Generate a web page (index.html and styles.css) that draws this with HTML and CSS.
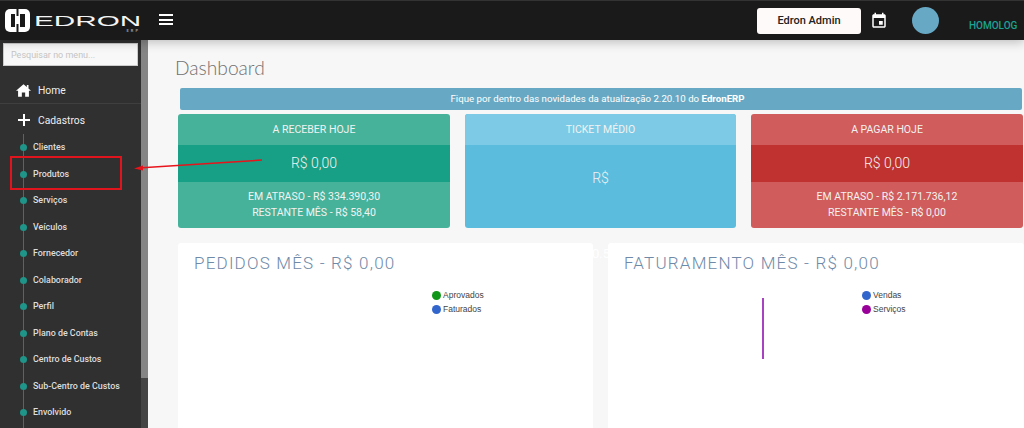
FILE: index.html
```html
<!DOCTYPE html>
<html lang="pt-BR">
<head>
    <meta charset="UTF-8">
    <meta name="viewport" content="width=device-width, initial-scale=1.0">
    <title>Edron ERP</title>
    <link rel="stylesheet" href="styles.css">
</head>
<body>
    <header class="topbar">
        <div class="logo">
            <svg class="logo-mark" width="25" height="23" viewBox="0 0 25 23">
                <rect width="25" height="23" rx="5" fill="#fff"/>
                <rect x="6" y="5" width="4" height="13" fill="#1a1a1a"/>
                <rect x="15" y="5" width="5" height="13" fill="#1a1a1a"/>
                <rect x="11.500" y="0" width="2" height="7" fill="#1a1a1a"/>
                <rect x="11.500" y="15" width="2" height="8" fill="#1a1a1a"/>
                <rect x="10" y="10" width="5" height="2.500" fill="#fff"/>
            </svg>
            <div class="logo-text">
                <span class="logo-name">EDRON</span>
                <span class="logo-sub">ERP</span>
            </div>
        </div>
        <div class="burger"><span></span><span></span><span></span></div>
        <div class="topbar-right">
            <button class="user-btn">Edron Admin</button>
            <svg class="calendar" width="18" height="18" viewBox="0 0 24 24">
                <path d="M17 12h-5v5h5v-5zM16 1v2H8V1H6v2H5c-1.100 0-2 .9-2 2v14c0 1.100.9 2 2 2h14c1.100 0 2-.9 2-2V5c0-1.100-.9-2-2-2h-1V1h-2zm3 18H5V8h14v11z" fill="#fff"/>
            </svg>
            <div class="avatar"></div>
            <span class="env">HOMOLOG</span>
        </div>
    </header>

    <div class="layout">
        <aside class="sidebar">
            <div class="search-box">
                <input type="text" placeholder="Pesquisar no menu...">
            </div>
            <a class="menu-top home">
                <svg width="15" height="13" viewBox="0 0 18 15">
                    <path d="M9 0L0 7.700H2.500V15H7V10H11V15H15.500V7.700H18L15 5V1H13V3.300Z" fill="#fff"/>
                </svg>
                <span>Home</span>
            </a>
            <a class="menu-top open">
                <svg width="12" height="12" viewBox="0 0 12 12">
                    <path d="M5 0H7V5H12V7H7V12H5V7H0V5H5Z" fill="#fff"/>
                </svg>
                <span>Cadastros</span>
            </a>
            <ul class="submenu">
                <li>Clientes</li>
                <li>Produtos</li>
                <li>Serviços</li>
                <li>Veículos</li>
                <li>Fornecedor</li>
                <li>Colaborador</li>
                <li>Perfil</li>
                <li>Plano de Contas</li>
                <li>Centro de Custos</li>
                <li>Sub-Centro de Custos</li>
                <li>Envolvido</li>
                <li></li>
            </ul>
        </aside>
        <div class="scrollbar"><div class="scroll-thumb"></div></div>

        <main class="content">
            <h1 class="page-title">Dashboard</h1>
            <div class="notice">Fique por dentro das novidades da atualização 2.20.10 do <b>EdronERP</b></div>

            <div class="cards">
                <section class="card green">
                    <div class="card-head">A RECEBER HOJE</div>
                    <div class="card-value">R$ 0,00</div>
                    <div class="card-foot">EM ATRASO - R$ 334.390,30<br>RESTANTE MÊS - R$ 58,40</div>
                </section>
                <section class="card blue">
                    <div class="card-head">TICKET MÉDIO</div>
                    <div class="card-single">R$</div>
                </section>
                <section class="card red">
                    <div class="card-head">A PAGAR HOJE</div>
                    <div class="card-value">R$ 0,00</div>
                    <div class="card-foot">EM ATRASO - R$ 2.171.736,12<br>RESTANTE MÊS - R$ 0,00</div>
                </section>
            </div>

            <div class="charts">
                <section class="chart">
                    <h2>PEDIDOS MÊS - R$ 0,00</h2>
                    <ul class="legend">
                        <li><i class="dot dot-green"></i>Aprovados</li>
                        <li><i class="dot dot-blue"></i>Faturados</li>
                    </ul>
                    <span class="stray-label">0.5</span>
                </section>
                <section class="chart">
                    <h2>FATURAMENTO MÊS - R$ 0,00</h2>
                    <div class="chart-line"></div>
                    <ul class="legend">
                        <li><i class="dot dot-blue"></i>Vendas</li>
                        <li><i class="dot dot-purple"></i>Serviços</li>
                    </ul>
                </section>
            </div>
        </main>
    </div>

    <!-- marcacao em vermelho por cima da tela -->
    <div class="mark-box"></div>
    <svg class="mark-arrow" width="130" height="14" viewBox="0 0 130 14">
        <line x1="128" y1="2" x2="8" y2="9.800" stroke="#e8141c" stroke-width="1.500"/>
        <path d="M0 10.500L9 7.500V12.500Z" fill="#e8141c"/>
    </svg>
</body>
</html>
```

FILE: styles.css
```css
* {
    box-sizing: border-box;
}

html, body {
    height: 100%;
}

body {
    margin: 0;
    overflow: hidden;
    background-color: #f7f7f7;
    font-family: Roboto, "Liberation Sans", sans-serif;
}

.topbar {
    height: 40px;
    background-color: #1a1a1a;
    border-top: 1px solid #333;
    display: flex;
    align-items: center;
    padding-left: 5px;
    box-shadow: 0 2px 10px rgba(0, 0, 0, 0.25);
    position: relative;
}

.logo {
    display: flex;
    align-items: center;
    width: 154px;
}

.logo-mark {
    margin-right: 4px;
    margin-top: -1px;
}

.logo-text {
    width: 106px;
    margin-top: 11px;
    height: 24px;
    display: flex;
    flex-direction: column;
}

.logo-name {
    color: #f4f4f4;
    font-family: "Liberation Sans", sans-serif;
    font-size: 14px;
    line-height: 14px;
    transform: scaleX(2.120);
    transform-origin: left center;
}

.logo-sub {
    align-self: flex-end;
    color: #999;
    font-size: 4px;
    line-height: 6px;
    font-weight: 700;
    letter-spacing: 2px;
}

.burger {
    width: 14px;
    display: flex;
    flex-direction: column;
    gap: 2.500px;
    margin-top: -2px;
}

.burger span {
    height: 2px;
    background-color: #fff;
}

.topbar-right {
    margin-left: auto;
    display: flex;
    align-items: center;
}

.user-btn {
    width: 104px;
    height: 26px;
    border: none;
    border-radius: 3px;
    background-color: #fffafa;
    color: #222;
    font-family: inherit;
    font-size: 11px;
    font-weight: 500;
    padding: 0;
    margin-right: 9px;
}

.calendar {
    margin-right: 24px;
}

.avatar {
    width: 27px;
    height: 27px;
    border-radius: 50%;
    background-color: #67a9c4;
    margin-right: 30px;
}

.env {
    width: 55px;
    color: #1aa394;
    font-size: 10px;
    font-weight: 500;
    margin-top: 9px;
}

.layout {
    display: flex;
    height: 388px;
}

.sidebar {
    width: 141px;
    background-color: #303030;
    overflow: hidden;
    flex-shrink: 0;
}

.search-box {
    padding: 3px 3px 0;
}

.search-box input {
    display: block;
    width: 135px;
    height: 23px;
    border: 1px solid #ccc;
    background-color: #f8f8f8;
    padding: 0 7px;
    font-family: inherit;
    font-size: 9px;
}

.search-box input::placeholder {
    color: #c4c4c4;
}

.menu-top {
    display: flex;
    align-items: center;
    color: #eee;
    font-size: 10.300px;
}

.menu-top.home {
    height: 38px;
    padding: 11px 0 0 16px;
    border-bottom: 1px solid #3f3f3f;
}

.menu-top.home span {
    margin-left: 7px;
}

.menu-top.open {
    height: 30px;
    padding: 2px 0 0 18px;
}

.menu-top.open span {
    margin-left: 8px;
}

.submenu {
    list-style: none;
    margin: 0 0 0 23px;
    padding: 0;
    border-left: 1px solid #1f7f78;
}

.submenu li {
    height: 26.500px;
    display: flex;
    align-items: center;
    padding-left: 9px;
    color: #ddd;
    font-size: 8.900px;
    font-weight: 500;
    position: relative;
}

.submenu li::before {
    content: "";
    position: absolute;
    left: -4px;
    top: 10px;
    width: 7px;
    height: 7px;
    border-radius: 50%;
    background-color: #1f9488;
}

.submenu li:empty::before {
    display: none;
}

.scrollbar {
    width: 7px;
    background-color: #444;
    flex-shrink: 0;
}

.scroll-thumb {
    height: 338px;
    background-color: #858585;
}

.content {
    flex: 1;
    padding-left: 30px;
    overflow: hidden;
}

.page-title {
    margin: 16px 0 9px -3px;
    font-family: Lato, sans-serif;
    font-size: 19.200px;
    line-height: 23px;
    font-weight: 300;
    color: #707070;
}

.notice {
    height: 22px;
    width: 842px;
    margin-left: 2px;
    padding-right: 7px;
    background-color: #67a9c4;
    border-radius: 2px;
    color: #fff;
    font-size: 9.700px;
    text-align: center;
    line-height: 22px;
}

.cards {
    display: grid;
    grid-template-columns: 272px 271px 272px;
    column-gap: 15px;
    margin: 4px 0 15px;
}

.card {
    height: 114px;
    border-radius: 3px;
    color: #f2f2f2;
    display: flex;
    flex-direction: column;
    overflow: hidden;
    font-size: 10.500px;
    text-align: center;
}

.card-head {
    height: 31px;
    line-height: 31px;
}

.card-value {
    height: 37px;
    line-height: 37px;
    font-size: 14px;
    font-weight: 300;
}

.card-foot {
    flex: 1;
    padding-top: 7px;
    line-height: 16px;
}

.card-single {
    flex: 1;
    display: flex;
    align-items: center;
    justify-content: center;
    padding-bottom: 17px;
    font-size: 14px;
    font-weight: 300;
}

.green {
    background-color: #46b29a;
}

.green .card-value {
    background-color: #17a085;
}

.blue {
    background-color: #5bbcdd;
}

.blue .card-head {
    background-color: #7ccae5;
}

.red {
    background-color: #d05c5b;
}

.red .card-value {
    background-color: #c0322f;
}

.charts {
    display: grid;
    grid-template-columns: 415px 416px;
    column-gap: 15px;
}

.chart {
    height: 200px;
    background-color: #fff;
    border-radius: 3px;
    position: relative;
}

.chart h2 {
    margin: 0;
    padding: 10px 0 0 16px;
    font-size: 17px;
    line-height: 20px;
    font-weight: 300;
    letter-spacing: 1.200px;
    color: #6f8aa8;
}

.legend {
    list-style: none;
    margin: 0;
    padding: 0;
    position: absolute;
    left: 254px;
    top: 45px;
    font-family: "Liberation Sans", sans-serif;
    font-size: 8.500px;
    color: #444;
}

.legend li {
    height: 14px;
    display: flex;
    align-items: center;
}

.dot {
    width: 9px;
    height: 9px;
    border-radius: 50%;
    margin-right: 2px;
}

.dot-green {
    background-color: #109618;
}

.dot-blue {
    background-color: #3366cc;
}

.dot-purple {
    background-color: #990099;
}

.chart-line {
    position: absolute;
    left: 154px;
    top: 55px;
    width: 1.500px;
    height: 61px;
    background-color: #a742c0;
}

.stray-label {
    position: absolute;
    left: 414px;
    top: 3px;
    color: #fff;
    font-size: 13px;
}

.mark-box {
    position: absolute;
    left: 10px;
    top: 156px;
    width: 112px;
    height: 34px;
    border: 2px solid #e0141c;
}

.mark-arrow {
    position: absolute;
    left: 134px;
    top: 158px;
}
```
